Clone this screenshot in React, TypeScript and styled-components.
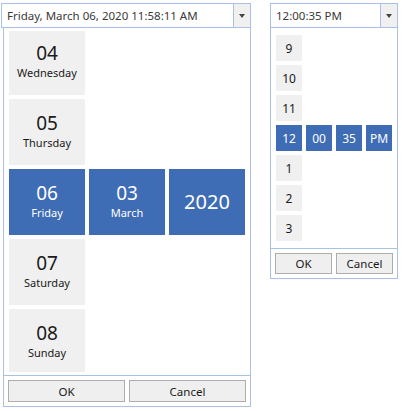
import React from 'react'
import styled, { createGlobalStyle } from 'styled-components'

const GlobalStyle = createGlobalStyle`
  html, body {
    margin: 0;
    padding: 0;
    background: #ffffff;
  }
  body {
    font-family: "Noto Sans", "Open Sans", sans-serif;
    color: #1e1e1e;
  }
`

const Page = styled.div`
  display: flex;
  align-items: flex-start;
  width: 402px;
  height: 411px;
  padding-top: 3px;
  box-sizing: border-box;
`

const Picker = styled.div<{ $width: number; $left: number }>`
  display: flex;
  flex-direction: column;
  width: ${p => p.$width}px;
  margin-left: ${p => p.$left}px;
`

const Combo = styled.div`
  display: flex;
  height: 25px;
  box-sizing: border-box;
  border: 1px solid #a9c1e6;
  background: #fff;
`

const ComboText = styled.div`
  flex: 1;
  display: flex;
  align-items: center;
  padding-left: 5px;
  font-size: 11.5px;
  color: #3a3a3a;
  white-space: nowrap;
  overflow: hidden;
`

const ComboButton = styled.div`
  width: 16px;
  display: flex;
  align-items: center;
  justify-content: center;
  border-left: 1px solid #a9c1e6;
  background: #f0f0f0;
`

const Arrow = styled.div`
  width: 0;
  height: 0;
  border-left: 3.5px solid transparent;
  border-right: 3.5px solid transparent;
  border-top: 4px solid #444;
`

const Popup = styled.div<{ $indent: number }>`
  display: flex;
  flex-direction: column;
  margin-top: -1px;
  margin-left: ${p => p.$indent}px;
  border: 1px solid #a9c1e6;
  background: #fff;
`

const Viewport = styled.div<{ $height: number; $top: number }>`
  height: ${p => p.$height}px;
  margin-top: ${p => p.$top}px;
  padding: 0 5px;
  overflow: hidden;
`

const Columns = styled.div<{ $shift: number }>`
  display: grid;
  grid-auto-flow: column;
  grid-auto-columns: max-content;
  column-gap: 4px;
  margin-top: ${p => p.$shift}px;
`

const Column = styled.div`
  display: flex;
  flex-direction: column;
  gap: 4px;
`

const Spacer = styled.div<{ $h: number }>`
  height: ${p => p.$h}px;
`

const DateTile = styled.div<{ $selected?: boolean }>`
  width: 76px;
  height: 66px;
  display: flex;
  flex-direction: column;
  align-items: center;
  justify-content: center;
  gap: 3px;
  background: ${p => (p.$selected ? '#3e6cb5' : '#f0f0f0')};
  color: ${p => (p.$selected ? '#ffffff' : '#1a1a1a')};
`

const Big = styled.div<{ $size?: number }>`
  font-size: ${p => p.$size ?? 19}px;
  line-height: ${p => p.$size ?? 19}px;
`

const Small = styled.div`
  font-size: 11px;
  line-height: 14px;
`

const TimeTile = styled.div<{ $selected?: boolean }>`
  width: 26px;
  height: 26px;
  display: flex;
  align-items: center;
  justify-content: center;
  font-size: 12px;
  background: ${p => (p.$selected ? '#3e6cb5' : '#f0f0f0')};
  color: ${p => (p.$selected ? '#ffffff' : '#1a1a1a')};
`

const Footer = styled.div<{ $top: number }>`
  display: flex;
  gap: 4px;
  margin-top: ${p => p.$top}px;
  border-top: 1px solid #a9c1e6;
  padding: 4px;
`

const Button = styled.button<{ $height: number }>`
  flex: 1;
  height: ${p => p.$height}px;
  margin: 0;
  padding: 0;
  border: 1px solid #adadad;
  background: #efefef;
  font-family: "Noto Sans", "Open Sans", sans-serif;
  font-size: 11.5px;
  color: #1a1a1a;
`

const days = [
  { n: '04', d: 'Wednesday' },
  { n: '05', d: 'Thursday' },
  { n: '06', d: 'Friday', selected: true },
  { n: '07', d: 'Saturday' },
  { n: '08', d: 'Sunday' },
]

const hours = ['9', '10', '11', '12', '1', '2', '3']

export default function App() {
  return (
    <Page>
      <GlobalStyle />
      <Picker $width={250} $left={1}>
        <Combo>
          <ComboText>Friday, March 06, 2020 11:58:11 AM</ComboText>
          <ComboButton><Arrow /></ComboButton>
        </Combo>
        <Popup $indent={2}>
          <Viewport $height={341} $top={3}>
            <Columns $shift={-2}>
              <Column>
                {days.map(day => (
                  <DateTile key={day.n} $selected={day.selected}>
                    <Big>{day.n}</Big>
                    <Small>{day.d}</Small>
                  </DateTile>
                ))}
              </Column>
              <Column>
                <Spacer $h={136} />
                <DateTile $selected>
                  <Big>03</Big>
                  <Small>March</Small>
                </DateTile>
              </Column>
              <Column>
                <Spacer $h={136} />
                <DateTile $selected>
                  <Big $size={20}>2020</Big>
                </DateTile>
              </Column>
            </Columns>
          </Viewport>
          <Footer $top={3}>
            <Button $height={22}>OK</Button>
            <Button $height={22}>Cancel</Button>
          </Footer>
        </Popup>
      </Picker>
      <Picker $width={128} $left={19}>
        <Combo>
          <ComboText>12:00:35 PM</ComboText>
          <ComboButton><Arrow /></ComboButton>
        </Combo>
        <Popup $indent={0}>
          <Viewport $height={206} $top={7}>
            <Columns $shift={0}>
              <Column>
                {hours.map(h => (
                  <TimeTile key={h} $selected={h === '12'}>{h}</TimeTile>
                ))}
              </Column>
              <Column>
                <Spacer $h={86} />
                <TimeTile $selected>00</TimeTile>
              </Column>
              <Column>
                <Spacer $h={86} />
                <TimeTile $selected>35</TimeTile>
              </Column>
              <Column>
                <Spacer $h={86} />
                <TimeTile $selected>PM</TimeTile>
              </Column>
            </Columns>
          </Viewport>
          <Footer $top={7}>
            <Button $height={21}>OK</Button>
            <Button $height={21}>Cancel</Button>
          </Footer>
        </Popup>
      </Picker>
    </Page>
  )
}
